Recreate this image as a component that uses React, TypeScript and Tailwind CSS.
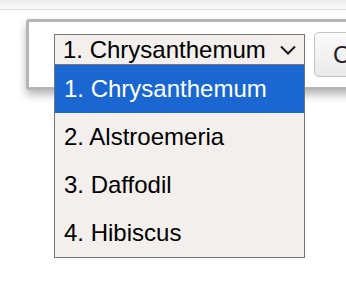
import React from "react";

const options = ["1. Chrysanthemum", "2. Alstroemeria", "3. Daffodil", "4. Hibiscus"];

export default function App() {
  return (
    <div
      className="relative w-[346px] h-[300px] overflow-hidden bg-white"
      style={{ fontFamily: '"Liberation Sans", Arial, sans-serif' }}
    >
      <div className="h-[9px] bg-gradient-to-b from-[#ececec] to-[#fcfcfc]" />
      <div className="h-px bg-[#dcdcdc]" />
      <div className="ml-[26px] mt-[9px] w-[400px] border-[3px] border-[#b5b5b5] rounded-[3px] bg-white shadow-[0_5px_8px_rgba(0,0,0,0.28)]">
        <div className="flex items-start gap-[9px] pl-[25px] pt-[10px] pb-[10px]">
          <div className="relative mt-[2px]">
            <div className="flex items-center justify-between w-[251px] h-[31px] border border-[#767676] bg-[#f2efec] pl-[8px] pr-[8px] text-[24px] leading-none text-black">
              <span>1. Chrysanthemum</span>
              <svg width="16" height="10" viewBox="0 0 16 10">
                <path d="M1 1.5 L8 8.5 L15 1.5" fill="none" stroke="#1a1a1a" strokeWidth="2" />
              </svg>
            </div>
            <div className="absolute left-0 top-[31px] w-[251px] border-x border-b border-[#767676] bg-[#f2efec] z-10">
              {options.map((o, i) => (
                <div
                  key={o}
                  className={
                    i === 0
                      ? "h-[48px] flex items-center pl-[9px] text-[24px] leading-none bg-[#1a67d2] text-white"
                      : "h-[48px] flex items-center pl-[9px] text-[24px] leading-none text-black"
                  }
                >
                  {o}
                </div>
              ))}
            </div>
          </div>
          <div className="h-[45px] w-[90px] rounded-[5px] border border-[#c2c2c2] bg-gradient-to-b from-[#fbfbfb] to-[#e9e9e9] flex items-center pl-[18px] text-[24px] leading-none text-[#222]">
            Close
          </div>
        </div>
      </div>
    </div>
  );
}
